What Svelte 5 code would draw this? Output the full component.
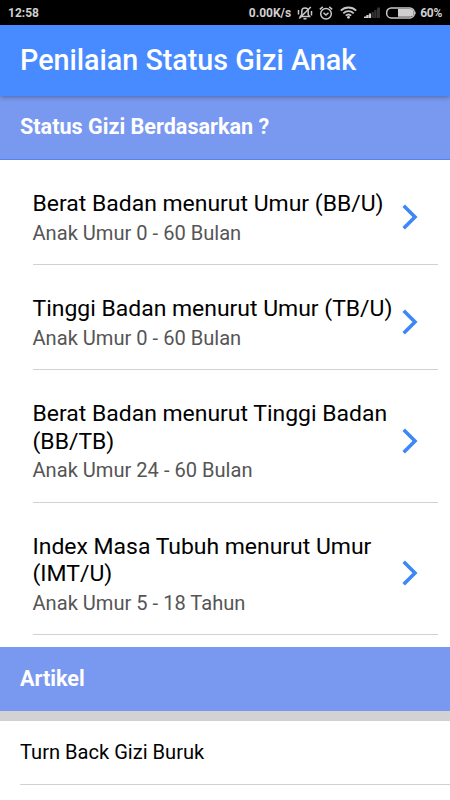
<script>
    const menus = [
        { title: 'Berat Badan menurut Umur (BB/U)', note: 'Anak Umur 0 - 60 Bulan' },
        { title: 'Tinggi Badan menurut Umur (TB/U)', note: 'Anak Umur 0 - 60 Bulan' },
        { title: 'Berat Badan menurut Tinggi Badan (BB/TB)', note: 'Anak Umur 24 - 60 Bulan' },
        { title: 'Index Masa Tubuh menurut Umur (IMT/U)', note: 'Anak Umur 5 - 18 Tahun' }
    ];

    const articles = ['Turn Back Gizi Buruk'];
</script>

<div class="app">
    <div class="statusbar">
        <span class="clock">12:58</span>
        <span class="speed">0.00K/s</span>
        <!-- muted bell -->
        <svg class="bell" width="16" height="14" viewBox="0 0 16 14">
            <path d="M3.5 10.5h9l-1.3-2V5.3a3.2 3.2 0 0 0-6.400 0v3.200zM6.500 12.800h3M1.500 4v4.500M14.500 5v4.500" />
            <path d="M13.800 1L2.200 12.500" />
        </svg>
        <!-- alarm -->
        <svg class="alarm" width="14" height="14" viewBox="0 0 14 14">
            <circle cx="7" cy="7.700" r="5.300" />
            <path d="M.8 3.400L3.800.9M13.200 3.400L10.200.9M4.500 6.700L7 9l2.500-2.300" />
        </svg>
        <!-- wifi -->
        <svg class="wifi" width="17" height="13" viewBox="0 0 17 13">
            <path d="M.8 4.700c4.400-4.300 11-4.300 15.400 0M3.300 7.300c3-2.900 7.400-2.900 10.400 0M5.800 9.700c1.600-1.500 3.800-1.500 5.400 0" />
            <circle cx="8.500" cy="11.300" r="1.400" />
        </svg>
        <!-- signal, filled up to the third step -->
        <svg class="signal" width="16" height="11" viewBox="0 0 16 11">
            <path class="on" d="M0 11V9.500h2.300V11zM2.300 11V8h2.300v3zM4.900 11V6.500h2.200V11z" />
            <path class="off" d="M7.600 11V5h2.200v6zM10.200 11V3h2.400v8zM13 11V.5h3V11z" />
        </svg>
        <!-- battery -->
        <svg class="battery" width="31" height="12" viewBox="0 0 31 12">
            <rect x=".7" y=".9" width="27.600" height="10" rx="4.500" />
            <path class="fill" d="M12 2h12.500a3 3 0 0 1 3 3v1.800a3 3 0 0 1-3 3H12zM29 4q1.500 2 0 4z" />
        </svg>
        <span class="percent">60%</span>
    </div>

    <header>
        <h1>Penilaian Status Gizi Anak</h1>
    </header>

    <main>
        <h2 class="divider first">Status Gizi Berdasarkan ?</h2>
        <ul class="menu">
            {#each menus as menu}
                <li>
                    <div class="label">
                        <h3>{menu.title}</h3>
                        <p>{menu.note}</p>
                    </div>
                    <svg class="arrow" width="16" height="26" viewBox="0 0 16 26">
                        <path d="M1.700 1.700L13 13 1.700 24.300" />
                    </svg>
                </li>
            {/each}
        </ul>

        <h2 class="divider">Artikel</h2>
        <ul class="articles">
            {#each articles as article}
                <li>{article}</li>
            {/each}
        </ul>
    </main>
</div>

<style>
    :global(body) {
        margin: 0;
        background: #fff;
    }

    .app {
        width: 450px;
        height: 800px;
        overflow: hidden;
        background: #fff;
        font-family: Roboto, sans-serif;
    }

    .statusbar {
        display: flex;
        align-items: center;
        box-sizing: border-box;
        height: 25px;
        padding: 0 8px;
        background: #000;
        color: #d0d0d0;
        font-size: 12px;
        font-weight: 700;
    }

    .statusbar svg {
        flex: none;
        fill: none;
        stroke: #c8c8c8;
        stroke-width: 1.5;
    }

    .clock {
        flex: 1;
    }

    .bell {
        margin-left: 6px;
    }

    .alarm {
        margin-left: 6px;
    }

    .wifi {
        margin-left: 7px;
    }

    .statusbar .wifi {
        stroke-width: 1.8;
    }

    .signal {
        margin-left: 7px;
    }

    .statusbar .signal path,
    .statusbar .fill,
    .statusbar .wifi circle {
        stroke: none;
        fill: #d0d0d0;
    }

    .statusbar .signal .off {
        fill: #333;
    }

    .battery {
        margin-left: 6px;
    }

    .percent {
        margin-left: 3px;
        font-size: 12px;
        letter-spacing: -0.3px;
    }

    header {
        position: relative;
        display: flex;
        align-items: center;
        box-sizing: border-box;
        height: 71px;
        padding: 0 0 2px 20px;
        background: #488aff;
        box-shadow: 0 1px 5px rgba(0, 0, 0, 0.35);
    }

    h1 {
        margin: 0;
        color: #fff;
        font-size: 28.7px;
        font-weight: 500;
        white-space: nowrap;
    }

    .divider {
        box-sizing: border-box;
        height: 64px;
        margin: 0;
        padding-left: 20px;
        background: #7998f0;
        color: #fff;
        font-size: 21.6px;
        font-weight: 700;
        line-height: 62px;
    }

    .divider.first {
        border-bottom: 1px solid #5484f0;
    }

    .divider:not(.first) {
        line-height: 64px;
    }

    ul {
        margin: 0;
        padding: 0;
        list-style: none;
    }

    .menu {
        padding: 0 12.5px 12px 32.5px;
    }

    .menu li {
        display: flex;
        align-items: center;
        box-sizing: border-box;
        padding: 30px 20px 16.5px 0;
        border-bottom: 1px solid #d2d2d2;
    }

    .label {
        flex: 1;
        min-width: 0;
    }

    h3 {
        margin: 0;
        width: 364px;
        color: #000;
        font-size: 22.95px;
        font-weight: 400;
        line-height: 27.5px;
    }

    p {
        margin: 0;
        color: #555;
        font-size: 20.1px;
        line-height: 30px;
    }

    .arrow {
        flex: none;
        margin-bottom: 4px;
        fill: none;
        stroke: #3d87f8;
        stroke-width: 3.6;
    }

    .articles {
        border-top: 10px solid #d2d2d2;
    }

    .articles li {
        box-sizing: border-box;
        height: 64px;
        margin-left: 20px;
        border-bottom: 1px solid #d2d2d2;
        color: #000;
        font-size: 20.1px;
        line-height: 62px;
    }
</style>
